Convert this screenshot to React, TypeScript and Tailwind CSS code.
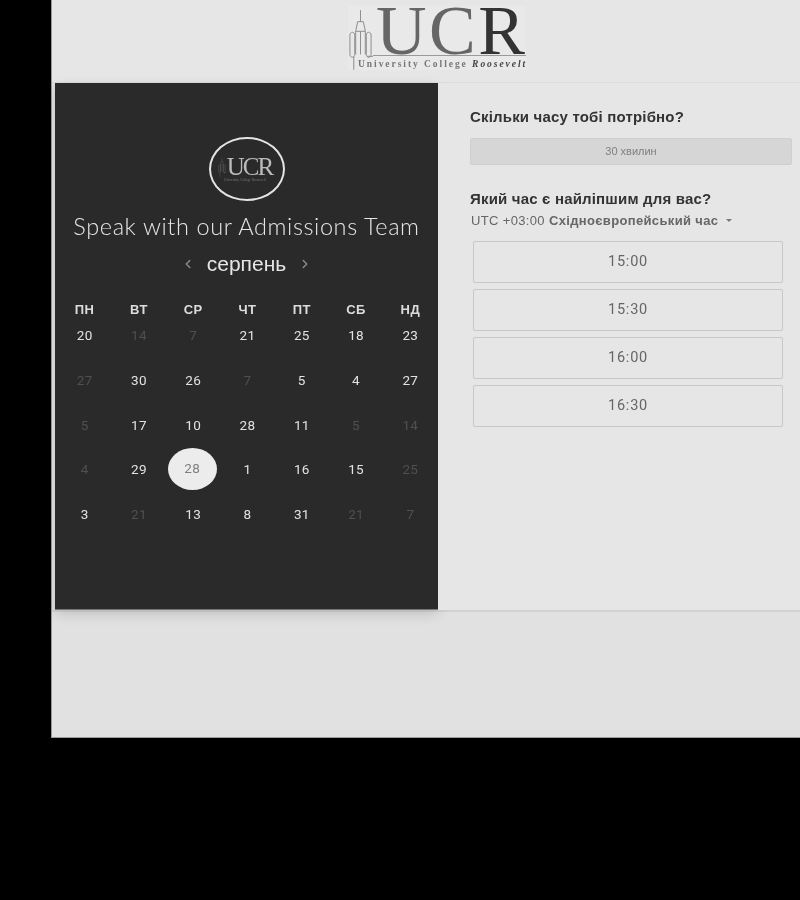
import { ChevronLeft, ChevronRight } from 'lucide-react'

const WEEKDAYS = ['пн', 'вт', 'ср', 'чт', 'пт', 'сб', 'нд']

// d = dimmed day, sel = picked day
const DAYS: { n: number; d?: boolean; sel?: boolean }[] = [
  { n: 20 }, { n: 14, d: true }, { n: 7, d: true }, { n: 21 }, { n: 25 }, { n: 18 }, { n: 23 },
  { n: 27, d: true }, { n: 30 }, { n: 26 }, { n: 7, d: true }, { n: 5 }, { n: 4 }, { n: 27 },
  { n: 5, d: true }, { n: 17 }, { n: 10 }, { n: 28 }, { n: 11 }, { n: 5, d: true }, { n: 14, d: true },
  { n: 4, d: true }, { n: 29 }, { n: 28, sel: true }, { n: 1 }, { n: 16 }, { n: 15 }, { n: 25, d: true },
  { n: 3 }, { n: 21, d: true }, { n: 13 }, { n: 8 }, { n: 31 }, { n: 21, d: true }, { n: 7, d: true },
]

const TIMES = ['15:00', '15:30', '16:00', '16:30']

function Tower({ className }: { className: string }) {
  return (
    <svg viewBox="0 0 26 64" fill="none" stroke="currentColor" strokeWidth="1" className={className}>
      <path d="M13 2v12M10 14h6l2 10h-10zM8 24v24M18 24v24M13 24v24" />
      <path d="M2 28c0-4 5-4 5 0v20c0 4-5 4-5 0zM19 28c0-4 5-4 5 0v20c0 4-5 4-5 0z" />
      <path d="M6 50v14M20 50h6" />
    </svg>
  )
}

export default function App() {
  return (
    <div className="h-[900px] w-[800px] overflow-hidden bg-black pl-[51px] font-['Liberation_Sans',sans-serif]">
      <div className="h-[738px] w-[749px] border-b border-l border-[#9a9a9a] bg-[#e1e1e1] blur-[0.35px]">
        {/* header logo */}
        <div className="flex h-[83px] justify-center border-b border-[#dcdcdc] bg-[#e6e6e6]">
          <div className="mt-[6px] ml-[22px] flex h-[64px] w-[178px] bg-[#e9e9e9]">
            <Tower className="mt-[2px] h-[62px] w-[25px] shrink-0 text-[#8a8a8a]" />
            <div className="w-[153px]">
              <div className="flex h-[50px] items-center border-b border-[#999] pl-[3px] font-['Liberation_Serif',serif] text-[70px] leading-[47px] tracking-[2.5px]">
                <span className="text-[#666]">UC</span>
                <span className="text-[#333]">R</span>
              </div>
              <div className="mt-[3px] ml-[-15px] h-[11px] whitespace-nowrap font-['Liberation_Serif',serif] text-[9.5px] leading-[11px] font-bold tracking-[1.95px] text-[#777]">
                University College <span className="italic text-[#444]">Roosevelt</span>
              </div>
            </div>
          </div>
        </div>

        <div className="flex h-[529px] border-b-2 border-[#d2d2d2]">
          {/* left calendar panel */}
          <div className="ml-[3px] flex h-[527px] w-[383px] shrink-0 flex-col items-center border-b border-[#777] bg-[#2a2a2a] shadow-[0_4px_12px_rgba(0,0,0,0.14)]">
            <div className="mt-[54px] flex h-[64px] w-[76px] flex-col items-center justify-center rounded-[50%] border-2 border-[#e4e4e4] pr-[3px] font-['Liberation_Serif',serif] text-[#bbb]">
              <div className="flex h-[22px] items-center text-[25px] leading-[22px] tracking-[-2px]">
                <Tower className="mr-[1px] h-[20px] w-[8px] text-[#777]" />
                UCR
              </div>
              <div className="h-[4px] whitespace-nowrap text-[3.5px] leading-[4px] text-[#777]">University College Roosevelt</div>
            </div>
            <h1 className="mt-[10px] whitespace-nowrap font-['Lato',sans-serif] text-[23.5px] leading-[30px] font-light tracking-[0.6px] text-[#e6e6e6]">
              Speak with our Admissions Team
            </h1>
            <div className="mt-[8px] flex h-[30px] items-center gap-[12px] text-[21px] text-[#e6e6e6]">
              <ChevronLeft size={14} strokeWidth={2.5} className="text-[#8a8a8a]" />
              серпень
              <ChevronRight size={14} strokeWidth={2.5} className="text-[#8a8a8a]" />
            </div>
            <div className="mt-[22px] ml-[2px] grid w-[380px] grid-cols-7 text-center">
              {WEEKDAYS.map((w) => (
                <div key={w} className="h-[25px] text-[13px] leading-[17px] font-bold tracking-[0.4px] uppercase text-[#dcdcdc]">
                  {w}
                </div>
              ))}
            </div>
            <div className="ml-[2px] grid w-[380px] grid-cols-7 text-center font-['Roboto',sans-serif] text-[13.5px] tracking-[0.3px]">
              {DAYS.map((day, i) =>
                day.sel ? (
                  <div key={i} className="flex h-[44.75px] justify-center">
                    <div className="mt-[-12px] ml-[-2px] flex h-[42px] w-[49px] items-center justify-center rounded-[50%] bg-[#ececec] pb-[3px] text-[#808080]">
                      {day.n}
                    </div>
                  </div>
                ) : (
                  <div
                    key={i}
                    className={`h-[44.75px] leading-[18px] ${day.d ? 'text-[#505050]' : 'text-[#e2e2e2]'}`}
                  >
                    {day.n}
                  </div>
                ),
              )}
            </div>
          </div>

          {/* right side */}
          <div className="flex-1 bg-[#e6e6e6] pt-[25px] pl-[32px]">
            <h2 className="text-[15px] leading-[17px] font-bold tracking-[0.18px] text-[#333]">Скільки часу тобі потрібно?</h2>
            <div className="mt-[13px] flex h-[27px] w-[322px] items-center justify-center rounded-[2px] border border-[#cfcfcf] bg-[#d6d6d6] text-[11px] text-[#808080]">
              30 хвилин
            </div>
            <h2 className="mt-[25px] text-[15px] leading-[17px] font-bold tracking-[0.18px] text-[#333]">Який час є найліпшим для вас?</h2>
            <div className="mt-[5px] ml-[1px] flex h-[17px] items-center text-[13px] tracking-[0.35px] whitespace-nowrap text-[#666]">
              UTC +03:00&nbsp;<b className="font-bold">Східноєвропейський час</b>
              <span className="ml-[8px] h-0 w-0 border-x-[3px] border-t-[3px] border-x-transparent border-t-[#777]" />
            </div>
            <div className="mt-[12px] ml-[3px] flex w-[310px] flex-col gap-[6px]">
              {TIMES.map((t) => (
                <div
                  key={t}
                  className="flex h-[42px] items-center justify-center rounded-[2px] border border-[#c8c8c8] font-['Roboto',sans-serif] text-[14.5px] tracking-[0.8px] text-[#666]"
                >
                  {t}
                </div>
              ))}
            </div>
          </div>
        </div>
      </div>
    </div>
  )
}
